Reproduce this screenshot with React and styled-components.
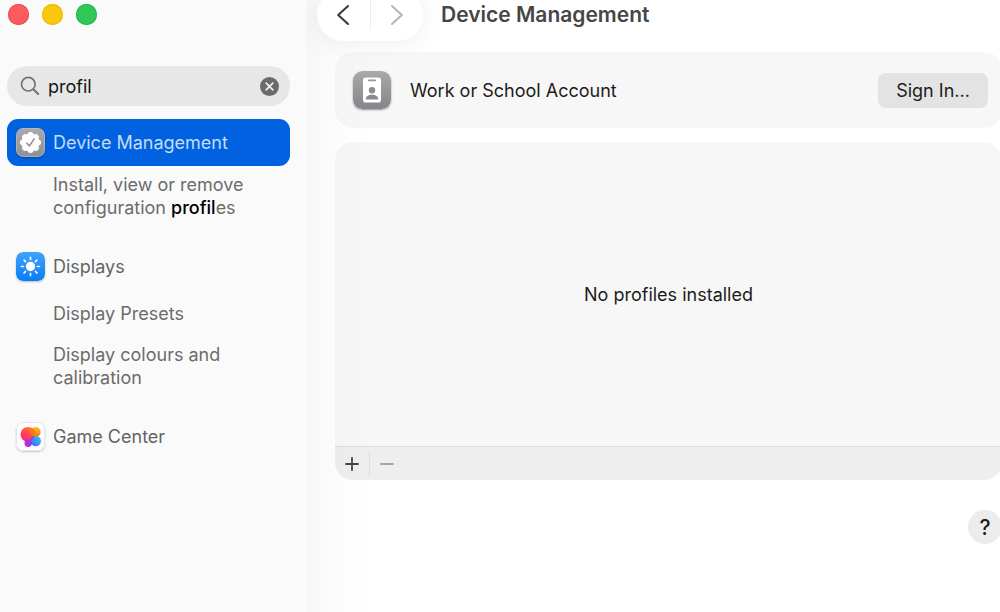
import React, { useState } from "react";
import styled, { createGlobalStyle } from "styled-components";

const GlobalStyle = createGlobalStyle`
  * { box-sizing: border-box; }
  body {
    margin: 0;
    background: #ffffff;
    font-family: Inter, "Liberation Sans", sans-serif;
    font-size: 18px;
    line-height: 23px;
    color: #1c1c1c;
  }
  button, input { font: inherit; color: inherit; }
  button { padding: 0; border: 0; background: none; }
  h1, p, ul { margin: 0; padding: 0; }
  ul { list-style: none; }
  svg { display: block; }
`;

const Window = styled.div`
  display: flex;
  min-height: 100vh;
  overflow: hidden;
`;

const Sidebar = styled.aside`
  flex: 0 0 306px;
  min-width: 0;
  padding: 4px 15px 24px 7px;
  background: #fafafa;
  border-right: 1px solid #fdfdfd;
`;

const TrafficLights = styled.div`
  display: flex;
  gap: 13px;
  padding-left: 1px;
`;

const Light = styled.button`
  width: 21px;
  height: 21px;
  border-radius: 50%;
  background: ${(p) => p.$fill};
  box-shadow: inset 0 0 0 1px ${(p) => p.$edge};
`;

const SearchField = styled.label`
  display: flex;
  align-items: center;
  gap: 8px;
  height: 40px;
  margin: 41px 0 13px;
  padding: 0 11px 0 13px;
  border-radius: 20px;
  background: #e7e7e7;
`;

const SearchInput = styled.input`
  flex: 1;
  min-width: 0;
  padding: 0;
  border: 0;
  outline: 0;
  background: none;
  color: #161616;
`;

const Groups = styled.ul`
  display: flex;
  flex-direction: column;
  gap: 24px;
`;

const Item = styled.button`
  display: flex;
  align-items: center;
  gap: 8px;
  width: 100%;
  height: 47px;
  padding: 0 9px;
  border-radius: 11px;
  text-align: left;
  color: ${(p) => (p.$selected ? "#c4dcfb" : "#646464")};
  background: ${(p) => (p.$selected ? "#0062e1" : "transparent")};
`;

const SubItem = styled.button`
  display: block;
  width: 100%;
  margin-top: ${(p) => p.$gap}px;
  padding: 0 36px 0 46px;
  text-align: left;
  color: #6c6c6c;
`;

const Match = styled.mark`
  background: none;
  color: #000000;
  font-weight: 500;
`;

const Main = styled.main`
  flex: 1;
  min-width: 0;
  background: linear-gradient(90deg, #f6f6f6, #fcfcfc 30px, #ffffff 64px);
`;

const Header = styled.header`
  display: flex;
  align-items: center;
  gap: 18px;
  height: 52px;
  margin-top: -11px;
  padding-left: 11px;
`;

const NavPill = styled.nav`
  display: flex;
  align-items: center;
  width: 106px;
  height: 52px;
  border-radius: 26px;
  background: #ffffff;
  box-shadow: 0 2px 24px rgba(0, 0, 0, 0.07);
`;

const NavButton = styled.button`
  display: flex;
  flex: 1;
  justify-content: center;
  color: ${(p) => (p.disabled ? "#b4b4b4" : "#3a3a3a")};
`;

const Divider = styled.span`
  width: 1px;
  height: ${(p) => p.$height}px;
  background: ${(p) => p.$color};
`;

const Title = styled.h1`
  font-size: 21px;
  line-height: 28px;
  font-weight: 600;
  color: #464646;
`;

const Content = styled.div`
  display: flex;
  flex-direction: column;
  gap: 14px;
  margin: 11px -2px 0 0;
  padding-left: 29px;
`;

const AccountCard = styled.section`
  display: flex;
  align-items: center;
  gap: 19px;
  height: 76px;
  padding: 0 14px 0 18px;
  border-radius: 18px;
  background: rgba(0, 0, 0, 0.031);
`;

const AccountName = styled.p`
  flex: 1;
`;

const SignIn = styled.button`
  width: 110px;
  height: 35px;
  border-radius: 8px;
  background: #e3e3e3;
`;

const ProfilesCard = styled.section`
  border-radius: 18px;
  overflow: hidden;
  background: rgba(0, 0, 0, 0.031);
`;

const EmptyState = styled.p`
  display: flex;
  align-items: center;
  justify-content: center;
  height: 304px;
`;

const Toolbar = styled.div`
  display: flex;
  align-items: center;
  height: 34px;
  border-top: 1px solid #dcdcdc;
  background: rgba(0, 0, 0, 0.035);
`;

const ToolButton = styled.button`
  display: flex;
  align-items: center;
  justify-content: center;
  width: 34px;
  height: 33px;
  color: ${(p) => (p.disabled ? "#a6a6a6" : "#444444")};
`;

const Help = styled.button`
  align-self: flex-end;
  width: 34px;
  height: 34px;
  margin-top: 16px;
  border-radius: 50%;
  background: #ececec;
  font-size: 21px;
  font-weight: 500;
`;

const IconTile = styled.svg`
  flex: none;
  border-radius: ${(p) => p.$radius}px;
  box-shadow: 0 1px 2px rgba(0, 0, 0, ${(p) => p.$shade || 0.25});
`;

const SearchIcon = () => (
  <svg width="20" height="20" viewBox="0 0 20 20" fill="none" stroke="#727272" strokeWidth="1.7" strokeLinecap="round" aria-hidden="true">
    <circle cx="8.3" cy="8.2" r="6.8" />
    <path d="M13.3 13.2 18.2 18" strokeWidth="2" />
  </svg>
);

const ClearIcon = () => (
  <svg width="19" height="19" viewBox="0 0 19 19" aria-hidden="true">
    <circle cx="9.5" cy="9.5" r="9.5" fill="#6b6b6b" />
    <path d="m6.2 6.2 6.6 6.6M12.8 6.2l-6.6 6.6" stroke="#f2f2f2" strokeWidth="1.7" strokeLinecap="round" />
  </svg>
);

const Chevron = ({ d }) => (
  <svg width="14" height="22" viewBox="0 0 14 22" fill="none" stroke="currentColor" strokeWidth="2.1" strokeLinecap="round" strokeLinejoin="round" aria-hidden="true">
    <path d={d} />
  </svg>
);

const BadgeIcon = () => (
  <IconTile $radius={7} width="29" height="29" viewBox="0 0 30 30" aria-hidden="true">
    <defs>
      <linearGradient id="badge" x2="0" y2="1">
        <stop stopColor="#aaaaae" />
        <stop offset="1" stopColor="#8f8f94" />
      </linearGradient>
    </defs>
    <rect width="30" height="30" rx="7" fill="url(#badge)" />
    <rect x="0.5" y="0.5" width="29" height="29" rx="6.5" fill="none" stroke="#bcbcc0" strokeOpacity="0.7" />
    <g fill="#ffffff">
      <circle cx="15" cy="15" r="9.2" />
      {[0, 45, 90, 135, 180, 225, 270, 315].map((a) => (
        <circle key={a} cx="15" cy="7.2" r="3.1" transform={`rotate(${a} 15 15)`} />
      ))}
    </g>
    <path d="m11.2 15.6 2.7 3 4.9-7.4" fill="none" stroke="#8e8e92" strokeWidth="1.5" strokeLinecap="round" strokeLinejoin="round" />
  </IconTile>
);

const SunIcon = () => (
  <IconTile $radius={7} width="29" height="29" viewBox="0 0 30 30" aria-hidden="true">
    <defs>
      <linearGradient id="sun" x2="0" y2="1">
        <stop stopColor="#40a4fb" />
        <stop offset="1" stopColor="#0a7cf5" />
      </linearGradient>
    </defs>
    <rect width="30" height="30" rx="7" fill="url(#sun)" />
    <circle cx="15" cy="15" r="4.8" fill="#ffffff" />
    <g stroke="#ffffff" strokeWidth="1.7" strokeLinecap="round">
      {[0, 45, 90, 135, 180, 225, 270, 315].map((a) => (
        <path key={a} d="M15 5.6v2.2" transform={`rotate(${a} 15 15)`} />
      ))}
    </g>
  </IconTile>
);

const GameIcon = () => (
  <IconTile $radius={7} $shade={0.2} width="29" height="29" viewBox="0 0 30 30" aria-hidden="true">
    <defs>
      <linearGradient id="warm" x1="0.9" y1="0" x2="0.2" y2="1">
        <stop stopColor="#ff8a1c" />
        <stop offset="0.5" stopColor="#ff4a4c" />
        <stop offset="1" stopColor="#fb1f8c" />
      </linearGradient>
      <linearGradient id="amber" x2="0" y2="1">
        <stop stopColor="#ffbe1e" />
        <stop offset="1" stopColor="#ff7417" />
      </linearGradient>
      <linearGradient id="cool" x1="1" x2="0" y2="1">
        <stop stopColor="#43c4f7" />
        <stop offset="1" stopColor="#3f62ee" />
      </linearGradient>
    </defs>
    <rect width="30" height="30" rx="7" fill="#fdfdfe" />
    <rect x="0.5" y="0.5" width="29" height="29" rx="6.5" fill="none" stroke="#e3e5ea" />
    <circle cx="20.3" cy="10.4" r="5.2" fill="url(#amber)" />
    <circle cx="12.4" cy="12.8" r="7.7" fill="url(#warm)" />
    <path d="M15.5 5.8a7.7 7.7 0 0 1 4.4 9.3 5.2 5.2 0 0 1-4.4-4.8Z" fill="#fb7a12" />
    <circle cx="12.6" cy="22" r="3.8" fill="#b62be0" />
    <circle cx="20.4" cy="19.6" r="5.5" fill="url(#cool)" />
    <path d="M15.3 18a5.5 5.5 0 0 1 3.2-3.7 7.7 7.7 0 0 1-3.1 5.5Z" fill="#8b38d8" />
    <path d="M15.2 19.7a3.8 3.8 0 0 1 .8 3.7 5.5 5.5 0 0 1-.8-3.7Z" fill="#4b35d4" />
  </IconTile>
);

const AccountIcon = () => (
  <IconTile $radius={9} $shade={0.4} width="38" height="38" viewBox="0 0 38 38" aria-hidden="true">
    <defs>
      <linearGradient id="account" x2="0" y2="1">
        <stop stopColor="#aaaaad" />
        <stop offset="1" stopColor="#858589" />
      </linearGradient>
    </defs>
    <rect width="38" height="38" rx="9" fill="url(#account)" />
    <rect x="10" y="6.5" width="18" height="25" rx="2.8" fill="#ffffff" />
    <rect x="15" y="8.6" width="8" height="1.7" rx="0.85" fill="#97979b" />
    <circle cx="19" cy="19.3" r="3.2" fill="#8e8e92" />
    <path d="M12.7 28.6c0-3 2.6-4.9 6.3-4.9s6.3 1.9 6.3 4.9Z" fill="#8a8a8e" />
  </IconTile>
);

const Strokes = ({ d }) => (
  <svg width="14" height="14" viewBox="0 0 14 14" stroke="currentColor" strokeWidth="1.8" strokeLinecap="round" aria-hidden="true">
    <path d={d} />
  </svg>
);

export default function App() {
  const [query, setQuery] = useState("profil");

  return (
    <>
      <GlobalStyle />
      <Window>
        <Sidebar>
          <TrafficLights>
            <Light aria-label="Close" $fill="#fc5b60" $edge="#ea4f55" />
            <Light aria-label="Minimise" $fill="#f9c80c" $edge="#ebba08" />
            <Light aria-label="Zoom" $fill="#32c759" $edge="#2ab54e" />
          </TrafficLights>
          <SearchField>
            <SearchIcon />
            <SearchInput aria-label="Search" value={query} onChange={(e) => setQuery(e.target.value)} />
            <button type="button" aria-label="Clear search" onClick={() => setQuery("")}>
              <ClearIcon />
            </button>
          </SearchField>
          <Groups>
            <li>
              <Item $selected aria-current="page">
                <BadgeIcon />
                Device Management
              </Item>
              <SubItem $gap={7}>
                Install, view or remove configuration <Match>profil</Match>es
              </SubItem>
            </li>
            <li>
              <Item>
                <SunIcon />
                Displays
              </Item>
              <SubItem $gap={12}>Display Presets</SubItem>
              <SubItem $gap={18}>Display colours and calibration</SubItem>
            </li>
            <li>
              <Item>
                <GameIcon />
                Game Center
              </Item>
            </li>
          </Groups>
        </Sidebar>
        <Main>
          <Header>
            <NavPill aria-label="History">
              <NavButton aria-label="Back">
                <Chevron d="M12 2 2.2 11 12 20" />
              </NavButton>
              <Divider $height={30} $color="#ededed" />
              <NavButton aria-label="Forward" disabled>
                <Chevron d="M2 2l9.8 9L2 20" />
              </NavButton>
            </NavPill>
            <Title>Device Management</Title>
          </Header>
          <Content>
            <AccountCard>
              <AccountIcon />
              <AccountName>Work or School Account</AccountName>
              <SignIn>Sign In...</SignIn>
            </AccountCard>
            <ProfilesCard>
              <EmptyState>No profiles installed</EmptyState>
              <Toolbar>
                <ToolButton aria-label="Add profile">
                  <Strokes d="M7 1v12M1 7h12" />
                </ToolButton>
                <Divider $height={25} $color="#dedede" />
                <ToolButton aria-label="Remove profile" disabled>
                  <Strokes d="M1 7h12" />
                </ToolButton>
              </Toolbar>
            </ProfilesCard>
            <Help aria-label="Help">?</Help>
          </Content>
        </Main>
      </Window>
    </>
  );
}
